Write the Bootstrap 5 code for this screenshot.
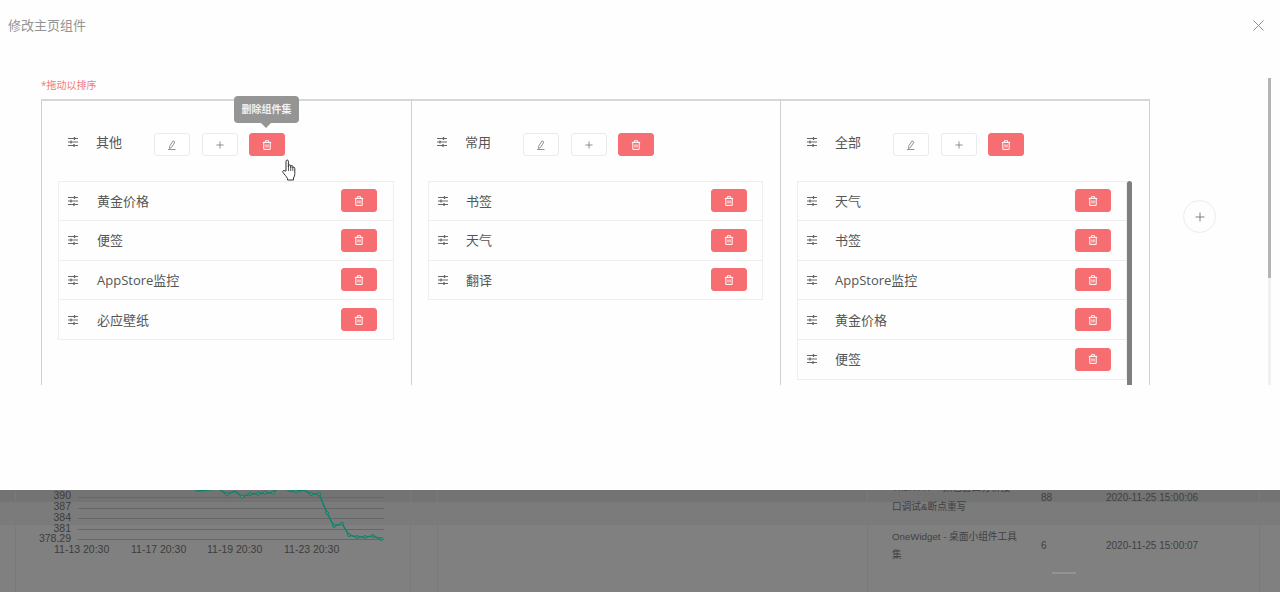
<!DOCTYPE html>
<html lang="zh-CN">
<head>
<meta charset="utf-8">
<title>修改主页组件</title>
<link rel="stylesheet" href="https://cdn.jsdelivr.net/npm/bootstrap@5.3.0/dist/css/bootstrap.min.css">
<style>
html,body{height:592px;overflow:hidden}
body{font-family:"Open Sans","Noto Sans CJK SC","Liberation Sans",sans-serif;color:#555;background:#808080}
.stage{position:relative;width:1280px;height:592px;overflow:hidden}
.dash{height:592px;background:linear-gradient(#737373 0 502px,#7b7b7b 502px 525px,#808080 525px);display:flex;color:#414141}
.dash-pane{border-left:1px solid #7a7a7a;height:592px;position:relative}
.pane-a{margin-left:15px;width:395px;flex:none}
.pane-b{width:27px;flex:none}
.pane-c{width:430px;flex:none}
.pane-d{width:393px;flex:none;border-right:1px solid #7a7a7a;padding-left:24px;display:flex;flex-direction:column;justify-content:flex-end;font-family:"Liberation Sans","Noto Sans CJK SC",sans-serif;font-size:10px}
.chart{position:absolute;left:-15px;top:0;display:block}
.chart text{font-family:"Liberation Sans",sans-serif;font-size:10.5px;fill:#3c3c3c}
.trow{display:flex;align-items:center}
.tname{width:149px;flex:none;line-height:18.5px;font-size:9.7px}
.tnum{width:65px;flex:none}
.rowa{height:37px;margin-bottom:10px}
.rowb{height:38px;margin-bottom:8px}
.rowb .tname{padding-top:2px}
.pager{width:24px;height:2px;background:#939393;margin:0 0 18px 160px}
.sheet{position:absolute;left:0;top:0;width:1280px;height:490px;background:#fdfefd;border-radius:0;border:0;box-shadow:none}
.sheet-head{height:78px;padding:0 8px;align-items:flex-start;flex:none}
.sheet-title{font-size:13px;color:#949494;line-height:18px;margin-top:16px;font-weight:400}
.sheet-x{margin:20px 8px 0 0;background:none;border:0;padding:0;line-height:0}
.sheet-body{height:307px;flex:none;overflow:hidden;padding:0 8px 0 41px;display:flex}
.hint{font-size:10px;line-height:14px;color:#f6787c;height:21px}
.board-wrap{width:1109px;flex:none}
.board{display:flex;height:400px;border-top:2px solid #d4d7d7}
.group{flex:none;width:370px;min-width:0;border-left:1px solid #cdd0d0;border-right:1px solid #cdd0d0;margin-right:-1px;padding:0 17px 0 16px}
.group:first-child{width:371px}
.group:last-child{margin-right:0}
.group-head{height:80px;padding:32px 0 0 10px;display:flex;align-items:flex-start}
.grip{width:10px;height:10px;flex:none;display:block;color:#666}
.group-head .grip{margin-top:4px}
.lbl{font-size:13px;line-height:20px;color:#555}
.group-head .lbl{width:58px;margin-left:18px;margin-top:-1px;flex:none}
.group:nth-child(2) .group-head{padding-left:9px}
.tool{width:36px;height:23px;padding:0;border-radius:3px;display:inline-flex;align-items:center;justify-content:center;line-height:0;flex:none}
.tool-w{background:#fff;border:1px solid #ebebeb;color:#777}
.tool-r,.tool-r:hover{background:#f66e72;border:1px solid #f66e72;color:#fff}
.group-head .tool{margin-right:12px}
.group-head .tool:nth-of-type(2){margin-right:11px}
.list-shell{display:flex;align-items:flex-start}
.items{flex:1 1 0;min-width:0;--bs-list-group-border-color:#eeeeee;--bs-list-group-bg:transparent;--bs-list-group-border-radius:0}
.item{height:39.75px;padding:0 16px 0 9px;display:flex;align-items:center;background:transparent}
.item .lbl{margin-left:19px;flex:1}
.group + .group .item{padding-right:15px}
.group + .group .item .lbl{margin-left:18px}
.thumb{width:5px;height:210px;background:#7f7f7f;border-radius:3px 3px 0 0;flex:none}
.addgroup{width:33px;height:33px;border:1px solid #ececec;border-radius:50%;margin:122px 0 0 33px;background:transparent;padding:0;display:flex;align-items:center;justify-content:center;flex:none;color:#808080}
.vbar{width:3px;margin-left:auto;height:307px;background:#f0f1f1;flex:none;position:relative;left:-1px}
.vbar-thumb{height:200px;background:#b3b5b5}
.tipbubble{position:absolute;left:234px;top:96px;width:65px;height:27px;background:#959595;color:#f1f1f1;border-radius:4px;font-size:10px;font-weight:700;line-height:27px;text-align:center;white-space:nowrap}
.tipbubble::after{content:"";position:absolute;left:27px;top:27px;border:5px solid transparent;border-top-color:#959595;border-bottom:0}
.pointer{position:absolute;left:282px;top:159px;display:block}
</style>
</head>
<body>
<svg width="0" height="0" class="d-block position-absolute">
  <symbol id="i-grip" viewBox="0 0 10 10"><path d="M0 1.500h10M0 5h10M0 8.500h10" stroke="currentColor" stroke-width="1" fill="none"/><path d="M6.500 0v3M3 3.500v3M6 7v3" stroke="currentColor" stroke-width="1.300" fill="none"/></symbol>
  <symbol id="i-trash" viewBox="0 0 10 10"><path d="M.8 2.400h8.400M3.400 2.200V.7h3.200v1.500M1.800 2.400v7h6.400v-7M4 4.400v3M6 4.400v3" stroke="currentColor" stroke-width="1" fill="none"/></symbol>
  <symbol id="i-plus" viewBox="0 0 10 10"><path d="M5 .5v9M.5 5h9" stroke="currentColor" stroke-width="1" fill="none"/></symbol>
  <symbol id="i-pen" viewBox="0 0 10 10"><path d="M2.600 6.300 6 .9l1.900 1.200-3.500 5.500-1.900.8zM1 9.500h7.500" stroke="currentColor" stroke-width=".8" fill="none"/></symbol>
</svg>
<div class="stage">
  <div class="dash">
    <div class="dash-pane pane-a">
      <svg class="chart" width="410" height="592" viewBox="0 0 410 592">
        <path d="M77 497.500H383M77 508.500H383M77 518.500H383M77 529.500H383M77 539.500H383" stroke="#666" fill="none"/>
        <g text-anchor="end"><text x="70" y="499">390</text><text x="70" y="510">387</text><text x="70" y="521">384</text><text x="70" y="532">381</text><text x="70" y="542">378.29</text></g>
        <text x="53" y="553">11-13 20:30</text><text x="130" y="553">11-17 20:30</text><text x="206" y="553">11-19 20:30</text><text x="283" y="553">11-23 20:30</text>
        <polyline points="193,489 196,491 218,489 226,494.300 234,491 241,496.600 249,494 257,493.700 264,492.700 272,492.700 276,489 285,489 288,491 295,491.500 303,490 310,494 318,494 326,513 333,526 341,523.700 348,535 356,537 364,537 372,536 380,539" fill="none" stroke="#0c8468" stroke-width="1.500"/>
        <g fill="#808080" stroke="#0c8468" stroke-width="1"><circle cx="226" cy="494.300" r="1.500"/><circle cx="241" cy="496.600" r="1.500"/><circle cx="249" cy="494" r="1.500"/><circle cx="257" cy="493.700" r="1.500"/><circle cx="264" cy="492.700" r="1.500"/><circle cx="272" cy="492.700" r="1.500"/><circle cx="295" cy="491.500" r="1.500"/><circle cx="310" cy="494" r="1.500"/><circle cx="318" cy="494" r="1.500"/><circle cx="326" cy="513" r="1.500"/><circle cx="333" cy="526" r="1.500"/><circle cx="341" cy="523.700" r="1.500"/><circle cx="348" cy="535" r="1.500"/><circle cx="356" cy="537" r="1.500"/><circle cx="364" cy="537" r="1.500"/><circle cx="372" cy="536" r="1.500"/><circle cx="380" cy="539" r="1.500"/></g>
      </svg>
    </div>
    <div class="dash-pane pane-b"></div>
    <div class="dash-pane pane-c"></div>
    <div class="dash-pane pane-d">
      <div class="trow rowa"><div class="tname">TheHTTP - 抓包窗口分析接<br>口调试&amp;断点重写</div><div class="tnum">88</div><div>2020-11-25 15:00:06</div></div>
      <div class="trow rowb"><div class="tname">OneWidget - 桌面小组件工具<br>集</div><div class="tnum">6</div><div>2020-11-25 15:00:07</div></div>
      <div class="pager"></div>
    </div>
  </div>

  <div class="modal-content sheet">
    <div class="modal-header sheet-head border-0">
      <h5 class="modal-title sheet-title">修改主页组件</h5>
      <button class="sheet-x" type="button" aria-label="关闭"><svg width="11" height="11" viewBox="0 0 11 11"><path d="M.5.5l10 10M10.500.5l-10 10" stroke="#8f8f8f" fill="none"/></svg></button>
    </div>
    <div class="modal-body sheet-body">
      <div class="board-wrap">
        <div class="hint">*拖动以排序</div>
        <div class="board">
          <div class="group">
            <div class="group-head"><svg class="grip"><use href="#i-grip"/></svg><span class="lbl">其他</span>
              <button class="btn tool tool-w"><svg width="10" height="10"><use href="#i-pen"/></svg></button><button class="btn tool tool-w"><svg width="8" height="8"><use href="#i-plus"/></svg></button><button class="btn tool tool-r"><svg width="10" height="10"><use href="#i-trash"/></svg></button></div>
            <div class="list-shell"><ul class="list-group items">
              <li class="list-group-item item"><svg class="grip"><use href="#i-grip"/></svg><span class="lbl">黄金价格</span><button class="btn tool tool-r"><svg width="10" height="10"><use href="#i-trash"/></svg></button></li>
              <li class="list-group-item item"><svg class="grip"><use href="#i-grip"/></svg><span class="lbl">便签</span><button class="btn tool tool-r"><svg width="10" height="10"><use href="#i-trash"/></svg></button></li>
              <li class="list-group-item item"><svg class="grip"><use href="#i-grip"/></svg><span class="lbl">AppStore监控</span><button class="btn tool tool-r"><svg width="10" height="10"><use href="#i-trash"/></svg></button></li>
              <li class="list-group-item item"><svg class="grip"><use href="#i-grip"/></svg><span class="lbl">必应壁纸</span><button class="btn tool tool-r"><svg width="10" height="10"><use href="#i-trash"/></svg></button></li>
            </ul></div>
          </div>
          <div class="group">
            <div class="group-head"><svg class="grip"><use href="#i-grip"/></svg><span class="lbl">常用</span>
              <button class="btn tool tool-w"><svg width="10" height="10"><use href="#i-pen"/></svg></button><button class="btn tool tool-w"><svg width="8" height="8"><use href="#i-plus"/></svg></button><button class="btn tool tool-r"><svg width="10" height="10"><use href="#i-trash"/></svg></button></div>
            <div class="list-shell"><ul class="list-group items">
              <li class="list-group-item item"><svg class="grip"><use href="#i-grip"/></svg><span class="lbl">书签</span><button class="btn tool tool-r"><svg width="10" height="10"><use href="#i-trash"/></svg></button></li>
              <li class="list-group-item item"><svg class="grip"><use href="#i-grip"/></svg><span class="lbl">天气</span><button class="btn tool tool-r"><svg width="10" height="10"><use href="#i-trash"/></svg></button></li>
              <li class="list-group-item item"><svg class="grip"><use href="#i-grip"/></svg><span class="lbl">翻译</span><button class="btn tool tool-r"><svg width="10" height="10"><use href="#i-trash"/></svg></button></li>
            </ul></div>
          </div>
          <div class="group">
            <div class="group-head"><svg class="grip"><use href="#i-grip"/></svg><span class="lbl">全部</span>
              <button class="btn tool tool-w"><svg width="10" height="10"><use href="#i-pen"/></svg></button><button class="btn tool tool-w"><svg width="8" height="8"><use href="#i-plus"/></svg></button><button class="btn tool tool-r"><svg width="10" height="10"><use href="#i-trash"/></svg></button></div>
            <div class="list-shell"><ul class="list-group items">
              <li class="list-group-item item"><svg class="grip"><use href="#i-grip"/></svg><span class="lbl">天气</span><button class="btn tool tool-r"><svg width="10" height="10"><use href="#i-trash"/></svg></button></li>
              <li class="list-group-item item"><svg class="grip"><use href="#i-grip"/></svg><span class="lbl">书签</span><button class="btn tool tool-r"><svg width="10" height="10"><use href="#i-trash"/></svg></button></li>
              <li class="list-group-item item"><svg class="grip"><use href="#i-grip"/></svg><span class="lbl">AppStore监控</span><button class="btn tool tool-r"><svg width="10" height="10"><use href="#i-trash"/></svg></button></li>
              <li class="list-group-item item"><svg class="grip"><use href="#i-grip"/></svg><span class="lbl">黄金价格</span><button class="btn tool tool-r"><svg width="10" height="10"><use href="#i-trash"/></svg></button></li>
              <li class="list-group-item item"><svg class="grip"><use href="#i-grip"/></svg><span class="lbl">便签</span><button class="btn tool tool-r"><svg width="10" height="10"><use href="#i-trash"/></svg></button></li>
            </ul><div class="thumb"></div></div>
          </div>
        </div>
      </div>
      <button class="addgroup" type="button" aria-label="添加"><svg width="10" height="10"><use href="#i-plus"/></svg></button>
      <div class="vbar"><div class="vbar-thumb"></div></div>
    </div>
  </div>

  <div class="tipbubble">删除组件集</div>
  <svg class="pointer" width="16" height="22" viewBox="0 0 16 22"><path d="M4 12V2.200c0-1.600 2.400-1.600 2.400 0V8l.1-1.200c0-1.300 2.200-1.300 2.200 0V8.500V7.500c0-1.300 2.100-1.300 2.100 0v1.500c0-1 2-1 2 .4v5.100c0 2-.5 3-1.300 4.500v2H5.500v-1.500C4 17 2.500 15.500 1 13.500c-1-1.500.8-2.800 2-1.500z" fill="#fff" stroke="#333" stroke-width="1"/><path d="M6.500 8v4M8.700 8v4M10.800 8.500V12" stroke="#333" stroke-width=".8" fill="none"/></svg>
</div>
<script src="https://cdn.jsdelivr.net/npm/bootstrap@5.3.0/dist/js/bootstrap.bundle.min.js"></script>
</body>
</html>
